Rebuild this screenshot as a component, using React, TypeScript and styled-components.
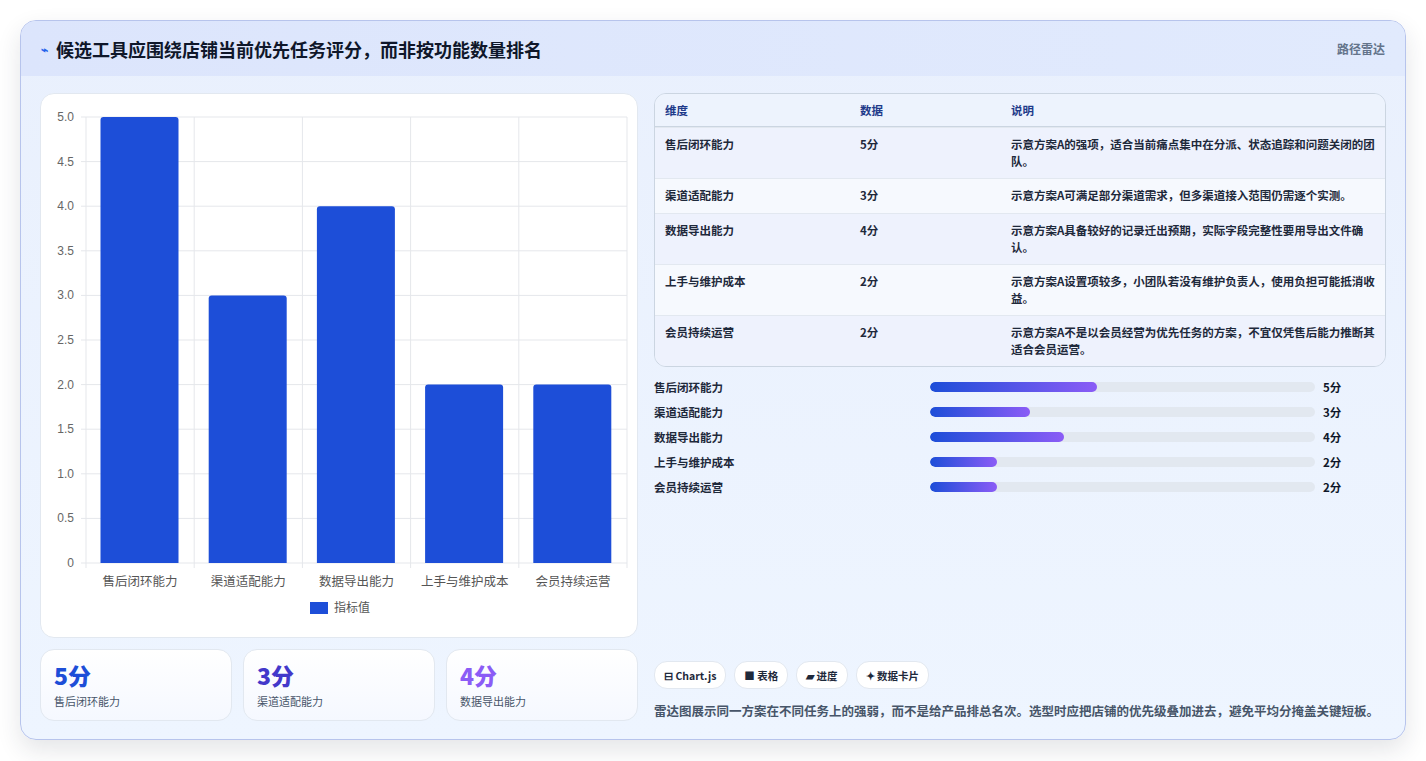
import React from "react";
import styled, { createGlobalStyle } from "styled-components";

const Global = createGlobalStyle`
  html, body { margin: 0; padding: 0; background: #fff; }
  body { font-family: "Noto Sans CJK SC", "Noto Sans", sans-serif; }
`;

const Page = styled.div`
  padding: 20px 20px 22px 20px;
  background: #fff;
`;
const Card = styled.div`
  border: 1px solid #b7c4ec;
  border-radius: 16px;
  background: linear-gradient(180deg, #e9f0fd 0%, #eef5ff 100%);
  box-shadow: 0 10px 24px rgba(30, 41, 59, 0.12);
  overflow: hidden;
`;
const Header = styled.div`
  height: 55px;
  display: flex;
  align-items: center;
  justify-content: space-between;
  padding: 0 20px;
  background: linear-gradient(90deg, #dce5fc, #e1eafd);
`;
const Title = styled.h1`
  margin: 0;
  font-size: 18px;
  font-weight: 700;
  color: #0f172a;
  display: flex;
  align-items: center;
  gap: 8px;
`;
const TitleIcon = styled.span`
  font-size: 12px;
  color: #2563eb;
`;
const HeaderTag = styled.span`
  font-size: 12px;
  color: #64748b;
  font-weight: 600;
`;
const Body = styled.div`
  display: grid;
  grid-template-columns: 598px 1fr;
  gap: 16px;
  padding: 17px 19px 18px 19px;
`;
const LeftCol = styled.div`
  display: flex;
  flex-direction: column;
  gap: 11px;
`;
const ChartCard = styled.div`
  height: 543px;
  background: #fff;
  border: 1px solid #e2e8f0;
  border-radius: 14px;
`;
const Stats = styled.div`
  display: grid;
  grid-template-columns: repeat(3, 1fr);
  gap: 11px;
`;
const Stat = styled.div`
  height: 72px;
  box-sizing: border-box;
  background: linear-gradient(180deg, #fff, #f5f8ff);
  border: 1px solid #e2e8f0;
  border-radius: 14px;
  padding: 10px 13px;
`;
const StatValue = styled.div<{ $c: string }>`
  font-size: 23px;
  font-weight: 800;
  line-height: 30px;
  color: ${(p) => p.$c};
`;
const StatLabel = styled.div`
  font-size: 11px;
  color: #475569;
  margin-top: 3px;
`;
const RightCol = styled.div`
  display: flex;
  flex-direction: column;
`;
const Table = styled.table`
  width: 100%;
  border-collapse: separate;
  border-spacing: 0;
  border: 1px solid #cbd5e1;
  border-radius: 12px;
  overflow: hidden;
  font-size: 11.5px;
  color: #1e293b;
  font-weight: 600;
`;
const Th = styled.th<{ $w?: number }>`
  text-align: left;
  font-weight: 700;
  color: #1e3a8a;
  background: #edf3fd;
  height: 32px;
  padding: 0 10px;
  border-bottom: 1px solid #cbd5e1;
  width: ${(p) => (p.$w ? p.$w + "px" : "auto")};
`;
const Tr = styled.tr<{ $alt: boolean }>`
  background: ${(p) => (p.$alt ? "#f6f9fe" : "#eef2fd")};
`;
const Td = styled.td`
  padding: 8px 10px;
  height: 18px;
  vertical-align: top;
  line-height: 17px;
  border-top: 1px solid #e2e8f0;
`;
const Bars = styled.div`
  display: flex;
  flex-direction: column;
  gap: 7px;
  margin-top: 11px;
`;
const BarRow = styled.div`
  display: grid;
  grid-template-columns: 276px 385px 1fr;
  align-items: center;
  gap: 0;
  height: 18px;
  font-size: 11.5px;
  font-weight: 600;
  color: #1e293b;
`;
const Track = styled.div`
  height: 10px;
  border-radius: 5px;
  background: #e2e8f0;
  overflow: hidden;
`;
const Fill = styled.div`
  height: 100%;
  border-radius: 5px;
  background: linear-gradient(90deg, #1d4ed8, #8b5cf6);
`;
const BarValue = styled.span`
  padding-left: 8px;
  font-weight: 700;
  color: #0f172a;
`;
const Spacer = styled.div`
  flex: 1;
`;
const Chips = styled.div`
  display: flex;
  gap: 8px;
`;
const Chip = styled.span`
  height: 26px;
  display: inline-flex;
  align-items: center;
  padding: 0 9px;
  border-radius: 13px;
  background: #fff;
  border: 1px solid #e2e8f0;
  font-size: 10.5px;
  font-weight: 700;
  color: #1e293b;
`;
const Desc = styled.p`
  margin: 12px 0 0;
  font-size: 12.5px;
  line-height: 20px;
  color: #475569;
  font-weight: 600;
`;

const data = [
  { name: "售后闭环能力", v: 5, d: "示意方案A的强项，适合当前痛点集中在分派、状态追踪和问题关闭的团队。" },
  { name: "渠道适配能力", v: 3, d: "示意方案A可满足部分渠道需求，但多渠道接入范围仍需逐个实测。" },
  { name: "数据导出能力", v: 4, d: "示意方案A具备较好的记录迁出预期，实际字段完整性要用导出文件确认。" },
  { name: "上手与维护成本", v: 2, d: "示意方案A设置项较多，小团队若没有维护负责人，使用负担可能抵消收益。" },
  { name: "会员持续运营", v: 2, d: "示意方案A不是以会员经营为优先任务的方案，不宜仅凭售后能力推断其适合会员运营。" },
];

function Chart() {
  const x0 = 45, x1 = 586, y0 = 469, yTop = 23;
  const cw = (x1 - x0) / 5;
  const ys = [0, 0.5, 1, 1.5, 2, 2.5, 3, 3.5, 4, 4.5, 5];
  const py = (v: number) => y0 - ((y0 - yTop) * v) / 5;
  return (
    <svg width="596" height="541" style={{ display: "block" }}>
      {ys.map((v) => (
        <g key={v}>
          <line x1={x0 - 5} x2={x1} y1={py(v)} y2={py(v)} stroke="#e5e7eb" />
          <text x={33} y={py(v) + 4} fontSize="12" fill="#666" textAnchor="end" fontFamily="Liberation Sans, sans-serif">
            {v === 0 ? "0" : v.toFixed(1)}
          </text>
        </g>
      ))}
      {[0, 1, 2, 3, 4, 5].map((i) => (
        <line key={i} x1={x0 + i * cw} x2={x0 + i * cw} y1={yTop} y2={y0 + 5} stroke="#e5e7eb" />
      ))}
      {data.map((d, i) => {
        const bx = x0 + i * cw + 14.5;
        const top = py(d.v);
        return (
          <g key={d.name}>
            <path
              d={`M${bx} ${y0} V${top + 3} Q${bx} ${top} ${bx + 3} ${top} H${bx + 75} Q${bx + 78} ${top} ${bx + 78} ${top + 3} V${y0} Z`}
              fill="#1d4ed8"
            />
            <text x={x0 + i * cw + cw / 2} y={492} fontSize="12.5" fill="#555" textAnchor="middle">
              {d.name}
            </text>
          </g>
        );
      })}
      <rect x={269} y={508} width={18} height={12} fill="#1d4ed8" />
      <text x={293} y={518} fontSize="12" fill="#555">指标值</text>
    </svg>
  );
}

export default function App() {
  return (
    <Page>
      <Global />
      <Card>
        <Header>
          <Title>
            <TitleIcon>⌁</TitleIcon>候选工具应围绕店铺当前优先任务评分，而非按功能数量排名
          </Title>
          <HeaderTag>路径雷达</HeaderTag>
        </Header>
        <Body>
          <LeftCol>
            <ChartCard>
              <Chart />
            </ChartCard>
            <Stats>
              <Stat>
                <StatValue $c="#1d4ed8">5分</StatValue>
                <StatLabel>售后闭环能力</StatLabel>
              </Stat>
              <Stat>
                <StatValue $c="#4338ca">3分</StatValue>
                <StatLabel>渠道适配能力</StatLabel>
              </Stat>
              <Stat>
                <StatValue $c="#8b5cf6">4分</StatValue>
                <StatLabel>数据导出能力</StatLabel>
              </Stat>
            </Stats>
          </LeftCol>
          <RightCol>
            <Table>
              <thead>
                <tr>
                  <Th $w={175}>维度</Th>
                  <Th $w={131}>数据</Th>
                  <Th>说明</Th>
                </tr>
              </thead>
              <tbody>
                {data.map((d, i) => (
                  <Tr key={d.name} $alt={i % 2 === 1}>
                    <Td>{d.name}</Td>
                    <Td>{d.v}分</Td>
                    <Td>{d.d}</Td>
                  </Tr>
                ))}
              </tbody>
            </Table>
            <Bars>
              {data.map((d) => (
                <BarRow key={d.name}>
                  <span>{d.name}</span>
                  <Track>
                    <Fill style={{ width: `${d.v * 8.68}%` }} />
                  </Track>
                  <BarValue>{d.v}分</BarValue>
                </BarRow>
              ))}
            </Bars>
            <Spacer />
            <Chips>
              <Chip>⊟ Chart.js</Chip>
              <Chip>■ 表格</Chip>
              <Chip>▰ 进度</Chip>
              <Chip>✦ 数据卡片</Chip>
            </Chips>
            <Desc>
              雷达图展示同一方案在不同任务上的强弱，而不是给产品排总名次。选型时应把店铺的优先级叠加进去，避免平均分掩盖关键短板。
            </Desc>
          </RightCol>
        </Body>
      </Card>
    </Page>
  );
}
